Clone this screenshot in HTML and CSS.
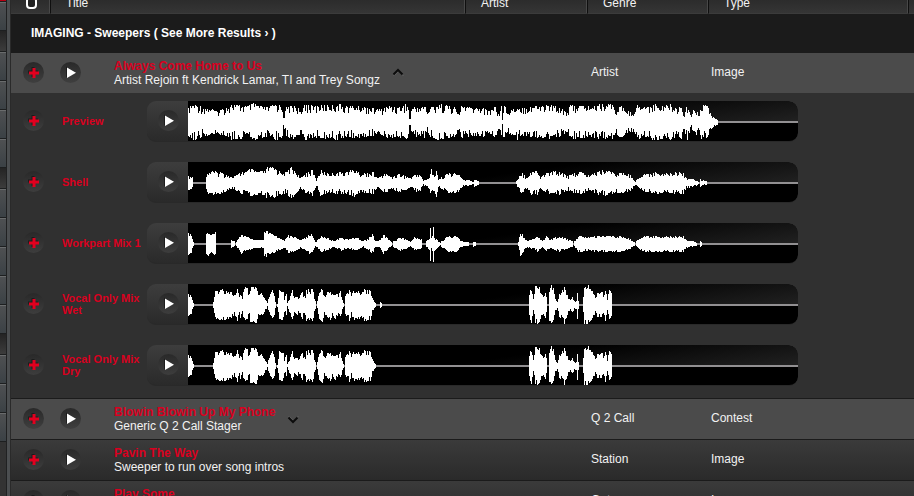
FILE: index.html
```html
<!DOCTYPE html>
<html lang="en">
<head>
    <meta charset="UTF-8">
    <meta name="viewport" content="width=device-width, initial-scale=1.0">
    <title>Imaging - Sweepers</title>
    <link rel="stylesheet" href="styles.css">
</head>
<body>

    <svg class="icons" aria-hidden="true">
        <symbol id="plus" viewBox="0 0 21 21">
            <path d="M8.500 5h3v3.500H15v3h-3.500V15h-3v-3.500H5v-3h3.500z" fill="#141414" opacity=".7"/>
            <path d="M9.500 6h3v3.500H16v3h-3.500V16h-3v-3.500H6v-3h3.500z" fill="#e2001f"/>
        </symbol>
        <symbol id="play" viewBox="0 0 21 21">
            <path d="M6 4.500l9 5.500-9 5.500z" fill="#141414" opacity=".7"/>
            <path d="M7 5.500l9 5.200-9 5.200z" fill="#fff"/>
        </symbol>
        <symbol id="chevron" viewBox="0 0 12 8">
            <path d="M2 7.500l4.500-4.500L11 7.500" fill="none" stroke="#777" stroke-width="1"/>
            <path d="M1.500 6.500L6 2l4.500 4.500" fill="none" stroke="#0c0c0c" stroke-width="2"/>
        </symbol>
    </svg>

    <div class="app">
        <div class="sidebar">
            <div class="tab active"></div>
            <div class="tab"></div>
            <div class="group"></div>
            <div class="tab"></div>
            <div class="tab"></div>
            <div class="tab"></div>
            <div class="tab"></div>
            <div class="group"></div>
            <div class="tab"></div>
            <div class="tab"></div>
            <div class="tab"></div>
            <div class="tab"></div>
            <div class="tab"></div>
            <div class="group"></div>
            <div class="tab"></div>
            <div class="tab"></div>
            <div class="tab"></div>
        </div>

        <div class="content">
            <table class="results">
                <colgroup>
                    <col class="col-check">
                    <col>
                    <col class="col-artist">
                    <col class="col-genre">
                    <col class="col-type">
                    <col class="col-end">
                </colgroup>
                <thead>
                    <tr>
                        <th class="check"><input type="checkbox" aria-label="Select all"></th>
                        <th>Title</th>
                        <th>Artist</th>
                        <th>Genre</th>
                        <th>Type</th>
                        <th></th>
                    </tr>
                </thead>
                <tbody>
                    <tr class="section">
                        <td colspan="6">IMAGING - Sweepers ( <a href="#">See More Results ›</a> )</td>
                    </tr>
                    <tr class="item light">
                        <td class="add"><button class="round" aria-label="Add"><svg><use href="#plus"/></svg></button></td>
                        <td>
                            <div class="title-cell">
                                <button class="round" aria-label="Play"><svg><use href="#play"/></svg></button>
                                <div class="names">
                                    <a href="#">Always Come Home to Us</a>
                                    <span>Artist Rejoin ft Kendrick Lamar, TI and Trey Songz</span>
                                </div>
                                <button class="toggle" aria-label="Collapse"><svg><use href="#chevron"/></svg></button>
                            </div>
                        </td>
                        <td></td>
                        <td>Artist</td>
                        <td>Image</td>
                        <td></td>
                    </tr>
                    <tr class="parts">
                        <td colspan="6">
                            <div class="part-list">
                                <div class="part">
                                    <button class="round" aria-label="Add"><svg><use href="#plus"/></svg></button>
                                    <a href="#">Preview</a>
                                    <div class="player">
                                        <button class="round" aria-label="Play"><svg><use href="#play"/></svg></button>
                                        <svg class="wave" data-wave="preview" viewBox="0 0 610 41" preserveAspectRatio="none"></svg>
                                    </div>
                                </div>
                                <div class="part">
                                    <button class="round" aria-label="Add"><svg><use href="#plus"/></svg></button>
                                    <a href="#">Shell</a>
                                    <div class="player">
                                        <button class="round" aria-label="Play"><svg><use href="#play"/></svg></button>
                                        <svg class="wave" data-wave="shell" viewBox="0 0 610 41" preserveAspectRatio="none"></svg>
                                    </div>
                                </div>
                                <div class="part">
                                    <button class="round" aria-label="Add"><svg><use href="#plus"/></svg></button>
                                    <a href="#">Workpart Mix 1</a>
                                    <div class="player">
                                        <button class="round" aria-label="Play"><svg><use href="#play"/></svg></button>
                                        <svg class="wave" data-wave="workpart" viewBox="0 0 610 41" preserveAspectRatio="none"></svg>
                                    </div>
                                </div>
                                <div class="part">
                                    <button class="round" aria-label="Add"><svg><use href="#plus"/></svg></button>
                                    <a href="#">Vocal Only Mix Wet</a>
                                    <div class="player">
                                        <button class="round" aria-label="Play"><svg><use href="#play"/></svg></button>
                                        <svg class="wave" data-wave="wet" viewBox="0 0 610 41" preserveAspectRatio="none"></svg>
                                    </div>
                                </div>
                                <div class="part">
                                    <button class="round" aria-label="Add"><svg><use href="#plus"/></svg></button>
                                    <a href="#">Vocal Only Mix Dry</a>
                                    <div class="player">
                                        <button class="round" aria-label="Play"><svg><use href="#play"/></svg></button>
                                        <svg class="wave" data-wave="dry" viewBox="0 0 610 41" preserveAspectRatio="none"></svg>
                                    </div>
                                </div>
                            </div>
                        </td>
                    </tr>
                    <tr class="item light ruled">
                        <td class="add"><button class="round" aria-label="Add"><svg><use href="#plus"/></svg></button></td>
                        <td>
                            <div class="title-cell">
                                <button class="round" aria-label="Play"><svg><use href="#play"/></svg></button>
                                <div class="names">
                                    <a href="#">Blowin Blowin Up My Phone</a>
                                    <span>Generic Q 2 Call Stager</span>
                                </div>
                                <button class="toggle closed" aria-label="Expand"><svg><use href="#chevron"/></svg></button>
                            </div>
                        </td>
                        <td></td>
                        <td>Q 2 Call</td>
                        <td>Contest</td>
                        <td></td>
                    </tr>
                    <tr class="item ruled">
                        <td class="add"><button class="round" aria-label="Add"><svg><use href="#plus"/></svg></button></td>
                        <td>
                            <div class="title-cell">
                                <button class="round" aria-label="Play"><svg><use href="#play"/></svg></button>
                                <div class="names">
                                    <a href="#">Pavin The Way</a>
                                    <span>Sweeper to run over song intros</span>
                                </div>
                            </div>
                        </td>
                        <td></td>
                        <td>Station</td>
                        <td>Image</td>
                        <td></td>
                    </tr>
                    <tr class="item ruled">
                        <td class="add"><button class="round" aria-label="Add"><svg><use href="#plus"/></svg></button></td>
                        <td>
                            <div class="title-cell">
                                <button class="round" aria-label="Play"><svg><use href="#play"/></svg></button>
                                <div class="names">
                                    <a href="#">Play Some</a>
                                    <span>Sweeper</span>
                                </div>
                            </div>
                        </td>
                        <td></td>
                        <td>Gates</td>
                        <td>Image</td>
                        <td></td>
                    </tr>
                </tbody>
            </table>
        </div>
    </div>

    <script src="waves.js"></script>
</body>
</html>
```
FILE: styles.css
```css
* {
    box-sizing: border-box;
}

body {
    margin: 0;
    background-color: #303030;
    color: #f2f2f2;
    font-family: "Liberation Sans", Arial, Helvetica, sans-serif;
    font-size: 12px;
    line-height: 14px;
    height: 100vh;
    overflow: hidden;
}

a {
    color: inherit;
    text-decoration: none;
}

button {
    border: none;
    padding: 0;
    background: none;
    cursor: pointer;
}

.icons {
    display: none;
}

.app {
    display: flex;
    height: 100vh;
    overflow: hidden;
}

/* Left rail */
.sidebar {
    flex: none;
    width: 11px;
    background: linear-gradient(to right, #333 6px, #202122 6px, #202122 7px, #4b4e50 7px, #4b4e50 10px, #2a2a2a 10px);
}

.tab,
.group {
    width: 6px;
    height: 29px;
    border-top: 1px solid #6a6c6d;
    border-bottom: 1px solid #1d1f20;
    background: linear-gradient(#4e5052, #3b4145);
}

.tab.active {
    height: 2px;
    border-top: none;
    background: #b80012;
}

.group {
    height: 21px;
    border-top: none;
    background: linear-gradient(#242424, #3c3c3c);
}

/* Results table */
.content {
    flex: 1;
    min-width: 0;
    overflow: hidden;
}

.results {
    width: 100%;
    margin-top: -14px;
    table-layout: fixed;
    border-collapse: separate;
    border-spacing: 0;
}

.col-check {
    width: 40px;
}

.col-artist {
    width: 122px;
}

.col-genre {
    width: 121px;
}

.col-type {
    width: 200px;
}

.col-end {
    width: 5px;
}

th {
    height: 28px;
    padding: 10px 0 0 15px;
    vertical-align: top;
    text-align: left;
    font-weight: normal;
    border-right: 1px solid #0f0f0f;
    border-bottom: 1px solid #3b3b3b;
    box-shadow: inset -1px 0 #484848;
    background: linear-gradient(#222, #353535);
}

th:last-child {
    padding: 0;
    border-right: none;
    box-shadow: none;
}

th.check input {
    appearance: none;
    display: block;
    width: 11px;
    height: 12px;
    margin: 1px 0 0;
    border: 2px solid #fff;
    border-radius: 4px;
    background: #222;
}

td {
    padding: 0;
}

.section td {
    height: 39px;
    padding: 0 0 2px 20px;
    font-weight: bold;
    color: #fff;
    background: #1b1b1b;
}

.item {
    background: linear-gradient(#3b3b3b, #2a2a2a);
}

.item.light {
    background: #4b4b4b;
}

.item td {
    height: 40px;
    padding: 0 0 2px 2px;
}

.item td:nth-child(4) {
    padding-left: 3px;
}

.item.ruled td {
    height: 41px;
    border-top: 1px solid #1b1b1b;
}

.item td.add {
    padding-left: 12px;
}

.title-cell {
    display: flex;
    align-items: center;
    padding-left: 7px;
}

.names {
    display: flex;
    flex-direction: column;
    margin-left: 33px;
    padding-top: 2px;
    white-space: nowrap;
}

.names a,
.part a {
    color: #d9001f;
    font-weight: bold;
}

.toggle {
    height: 8px;
    margin-left: 12px;
}

.toggle svg {
    display: block;
    width: 12px;
    height: 8px;
}

.toggle.closed {
    margin-top: 4px;
}

.toggle.closed svg {
    transform: scaleY(-1);
}

.round {
    display: block;
    flex: none;
    width: 21px;
    height: 21px;
    border-radius: 50%;
    background: linear-gradient(#292929, #3d3d3d);
}

.light .round {
    background: linear-gradient(#292929, #3f3f3f);
}

.round svg {
    display: block;
    width: 21px;
    height: 21px;
}

/* Expanded parts */
.parts td {
    background: #303030;
}

.part-list {
    display: flex;
    flex-direction: column;
    gap: 20px;
    padding: 8px 116px 12px 12px;
}

.part {
    display: grid;
    grid-template-columns: 39px 85px 1fr;
    align-items: center;
}

.part a {
    padding-bottom: 2px;
    font-size: 11px;
    line-height: 12px;
}

.part .round {
    margin-bottom: 2px;
}

.player {
    display: flex;
    align-items: center;
    height: 41px;
    overflow: hidden;
    border-radius: 9px;
    border-bottom: 1px solid #292929;
    background: linear-gradient(#3d3d3d, #2a2a2a);
}

.player .round {
    margin: 0 9px 1px 11px;
}

.wave {
    flex: 1;
    min-width: 0;
    height: 41px;
    margin-bottom: -1px;
    border-radius: 0 9px 9px 0;
    background: linear-gradient(172deg, rgba(34, 34, 34, 0) 30%, #222) right top / 60% 22px no-repeat #000;
}
```
FILE: waves.js
```js
// Each burst is a list of x, half-height pairs along the 610px strip.
const vocal = [
    [0, 11, 3, 9, 5, 2],
    [25, 3, 27, 14, 34, 16, 42, 14, 46, 10, 48, 12, 49, 16, 51, 8, 52, 13, 54, 6, 55, 17, 57, 18, 59, 17, 60, 10, 61, 11, 62, 18, 68, 18, 70, 10, 73, 12, 76, 7, 79, 2],
    [80, 7, 84, 15, 86, 10, 87, 3],
    [89, 2, 91, 15, 95, 16, 96, 7, 98, 11, 99, 2],
    [100, 4, 103, 12, 104, 16, 106, 7, 109, 11, 110, 6, 112, 10, 114, 14, 115, 9, 117, 10, 118, 16, 125, 16, 126, 6, 127, 4],
    [129, 4, 131, 15, 134, 17, 136, 9, 138, 12, 142, 16, 144, 11, 147, 14, 150, 10, 152, 14, 154, 5, 155, 2],
    [157, 10, 159, 12, 161, 17, 163, 10, 165, 15, 170, 14, 173, 13, 176, 16, 182, 16, 184, 7, 186, 4, 187, 2],
    [341, 12, 343, 18, 345, 6, 347, 19, 351, 19, 353, 11, 355, 9, 357, 14, 358, 8],
    [361, 16, 363, 20, 365, 17, 367, 6, 369, 4, 371, 12, 374, 15, 376, 19, 378, 13, 380, 8, 382, 5, 384, 8, 386, 4, 388, 5, 389, 15, 390, 4],
    [395, 8, 396, 20, 400, 20, 404, 15, 407, 8, 409, 13, 411, 11, 413, 17, 415, 9, 417, 17, 419, 6, 421, 16, 423, 14]
];

const waves = {
    preview: {
        rough: 0.5,
        bursts: [[
            0, 14, 5, 18, 10, 17, 15, 14, 22, 14, 28, 11, 35, 14, 44, 18, 52, 17, 60, 16, 65, 19, 72, 16, 80, 15, 87, 18, 92, 17,
            94, 15, 95, 5, 96, 7, 98, 15, 106, 17, 111, 13, 113, 8, 116, 19, 125, 16, 140, 17, 150, 18, 160, 16, 170, 16, 180, 15, 192, 13,
            200, 16, 210, 15, 218, 18, 220, 15, 221, 3, 222, 3, 223, 15, 237, 16, 239, 9, 242, 15, 250, 18, 258, 17, 266, 15,
            271, 7, 273, 17, 285, 14, 295, 15, 300, 11, 307, 16, 311, 7, 313, 17, 314, 3, 315, 17, 320, 12, 328, 14, 329, 19, 330, 19,
            331, 14, 345, 16, 360, 17, 370, 16, 379, 10, 382, 17, 395, 16, 405, 16, 411, 18, 422, 19, 427, 13, 433, 16, 439, 11,
            444, 10, 450, 18, 458, 15, 464, 18, 482, 18, 489, 14, 494, 18, 495, 7, 499, 18, 503, 5, 506, 16, 511, 8, 513, 19,
            520, 16, 523, 7, 527, 4, 529, 3
        ]]
    },
    shell: {
        rough: 0.45,
        bursts: [
            [0, 7, 4, 6],
            [18, 7, 20, 11, 24, 12, 32, 11, 38, 9, 44, 6, 50, 9, 55, 12, 58, 11, 62, 15, 68, 12, 76, 12, 79, 16, 84, 16, 92, 12, 98, 11, 103, 16, 108, 11, 112, 5, 117, 10, 124, 13, 128, 3, 132, 13, 140, 10, 150, 11, 160, 12, 167, 14, 172, 9, 177, 10, 185, 11, 189, 5, 197, 10, 203, 6, 210, 9, 216, 8, 222, 5, 227, 9, 232, 9, 235, 2, 238, 4, 241, 6, 243, 14, 244, 8, 246, 8, 248, 14, 250, 4, 256, 8, 262, 11, 270, 9, 274, 4, 280, 3, 285, 1],
            [286, 4, 290, 2],
            [328, 2, 333, 11, 338, 6, 343, 12, 349, 12, 352, 6, 357, 10, 365, 12, 372, 12, 380, 7, 385, 10, 393, 11, 400, 8, 410, 12, 418, 14, 424, 11, 435, 10, 443, 8, 447, 2, 455, 9, 462, 10, 470, 11, 478, 10, 486, 11, 495, 11, 498, 5, 505, 4, 510, 2],
            [512, 4, 518, 2]
        ]
    },
    workpart: {
        rough: 0.3,
        bursts: [
            [0, 11, 3, 9, 5, 2],
            [18, 11, 20, 12, 23, 9, 27, 12],
            [43, 4, 46, 3],
            [48, 2, 53, 10, 57, 8, 62, 6, 66, 4, 75, 4, 76, 12, 79, 13, 84, 10, 92, 6, 96, 4, 100, 9, 108, 7, 112, 4, 118, 7, 122, 11, 125, 7, 127, 2],
            [128, 3, 133, 8, 140, 6, 145, 3, 153, 7, 160, 5, 168, 7, 175, 3, 180, 6, 184, 10, 187, 3, 192, 4, 195, 10, 200, 5, 203, 2],
            [205, 3, 212, 7, 218, 5, 222, 2, 226, 7, 233, 5],
            [238, 3, 241, 6, 242, 17, 243, 6, 244, 8, 245, 18, 246, 7, 249, 4, 252, 1],
            [253, 3, 260, 8, 269, 8, 272, 3, 280, 2],
            [285, 3, 287, 2],
            [330, 3, 332, 12, 334, 10, 337, 5, 340, 4, 345, 5, 349, 8, 354, 3, 358, 8, 362, 4, 365, 6, 370, 8, 377, 6, 384, 3],
            [386, 3, 390, 8, 400, 7, 408, 8, 418, 9, 430, 8, 440, 6, 446, 2],
            [448, 3, 455, 8, 465, 8, 475, 8, 485, 8, 495, 8, 498, 4, 503, 3, 508, 2],
            [512, 3, 513, 2]
        ]
    },
    wet: { rough: 0.3, bursts: [...vocal, [192, 3, 193, 2]] },
    dry: { rough: 0.3, bursts: vocal }
};

const MID = 21;

// Small repeatable noise, so a strip looks the same on every load
function noise(n) {
    const v = Math.sin(n * 12.9898) * 43758.5453;
    return v - Math.floor(v);
}

function burstPath(points, rough) {
    let d = "";
    for (let i = 0; i < points.length - 2; i += 2) {
        const [x1, h1, x2, h2] = points.slice(i, i + 4);
        const last = i === points.length - 4;
        for (let x = x1; x < (last ? x2 + 1 : x2); x++) {
            const h = h1 + (h2 - h1) * (x - x1) / (x2 - x1);
            const up = Math.max(1, Math.round(h * (1 - rough * noise(x) ** 2)));
            const down = Math.max(1, Math.round(h * (1 - rough * noise(x + noise(x) * 0.01) ** 2)));
            d += `M${x} ${MID - up}h1v${up + down}h-1z`;
        }
    }
    return d;
}

document.querySelectorAll(".wave").forEach(svg => {
    const wave = waves[svg.dataset.wave];
    const d = wave.bursts.map(points => burstPath(points, wave.rough)).join("");
    svg.innerHTML = `<path d="M0 ${MID - 1}h610v2H0z" fill="#929092"/><path d="${d}" fill="#fff"/>`;
});
```
